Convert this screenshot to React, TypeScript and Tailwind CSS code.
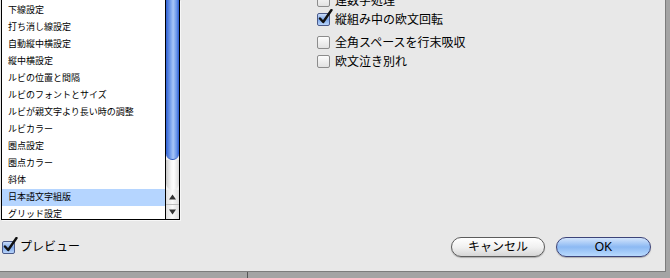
import { ReactNode } from 'react'

const FONT = "font-['Lucida_Grande','Liberation_Sans','Noto_Sans_CJK_JP',sans-serif]"

const items = [
  '下線設定',
  '打ち消し線設定',
  '自動縦中横設定',
  '縦中横設定',
  'ルビの位置と間隔',
  'ルビのフォントとサイズ',
  'ルビが親文字より長い時の調整',
  'ルビカラー',
  '圏点設定',
  '圏点カラー',
  '斜体',
  '日本語文字組版',
  'グリッド設定',
]

function Check({ checked }: { checked?: boolean }) {
  return (
    <div className="relative w-[13px] h-[13px] shrink-0">
      <div
        className={
          checked
            ? 'w-full h-full rounded-[2px] border border-[#4a5a8a] bg-gradient-to-b from-[#c9dcf8] via-[#7fa9ea] to-[#b8d4fa]'
            : 'w-full h-full rounded-[2px] border border-[#8c8c8c] bg-gradient-to-b from-[#fdfdfd] via-[#efefef] to-[#e2e2e2]'
        }
      />
      {checked && (
        <svg className="absolute left-[1px] top-[-4px]" width="15" height="16" viewBox="0 0 15 16">
          <path d="M2 9.5 L5.2 13 L13.5 1" fill="none" stroke="#111" strokeWidth="2.4" strokeLinecap="round" strokeLinejoin="round" />
        </svg>
      )}
    </div>
  )
}

function Option({ checked, children, className }: { checked?: boolean; children: ReactNode; className?: string }) {
  return (
    <div className={`flex items-center gap-[5px] h-[13px] ${className ?? ''}`}>
      <Check checked={checked} />
      <span className="text-[12px] leading-none text-black">{children}</span>
    </div>
  )
}

function Scrollbar() {
  return (
    <div className="w-[14px] flex flex-col bg-[#f0f0f0] border-l border-black">
      {/* thumb */}
      <div className="h-[160px] rounded-b-[7px] border-b border-[#2450b8] bg-[linear-gradient(to_right,#2f5fd2,#6d98ea_30%,#a7c5f6_55%,#6d98ea_80%,#2f5fd2)]" />
      {/* track */}
      <div className="flex-1 bg-[linear-gradient(to_right,#c9c9c9,#f7f7f7_40%,#ffffff_60%,#d9d9d9)] rounded-b-[7px]" />
      {/* arrows */}
      <div className="h-[15px] flex items-center justify-center bg-[linear-gradient(to_right,#dedede,#fafafa,#dedede)] border-b border-[#bdbdbd]">
        <svg width="7" height="6" viewBox="0 0 7 6"><path d="M3.5 0.5 L7 5.5 L0 5.5 Z" fill="#333" /></svg>
      </div>
      <div className="h-[14px] flex items-center justify-center bg-[linear-gradient(to_right,#dedede,#fafafa,#dedede)]">
        <svg width="7" height="6" viewBox="0 0 7 6"><path d="M0 0.5 L7 0.5 L3.5 5.5 Z" fill="#333" /></svg>
      </div>
    </div>
  )
}

export default function App() {
  return (
    <div className={`w-[670px] h-[278px] overflow-hidden bg-[#a4a4a4] ${FONT}`}>
      <div className="w-[666px] h-[272px] flex flex-col bg-[#e8e8e8] border-r border-b border-[#7c7c7c]">
        {/* top area */}
        <div className="flex h-[220px]">
          <div className="w-[179px] ml-px flex border-x border-b border-black shadow-[1px_1px_0_#f7f7f7]">
            <div className="flex-1 bg-white pt-[2px]">
              {items.map(t => (
                <div
                  key={t}
                  className={`h-[17px] flex items-center pl-[6px] text-[9px] leading-none text-black ${
                    t === '日本語文字組版' ? 'bg-[#b5d5ff]' : ''
                  }`}
                >
                  {t}
                </div>
              ))}
            </div>
            <Scrollbar />
          </div>

          <div className="ml-[137px] flex flex-col -mt-[6px]">
            <Option>連数字処理</Option>
            <Option checked className="mt-[6px]">縦組み中の欧文回転</Option>
            <Option className="mt-[10px]">全角スペースを行末吸収</Option>
            <Option className="mt-[6px]">欧文泣き別れ</Option>
          </div>
        </div>

        {/* bottom row */}
        <div className="flex items-center pt-[17px] pr-[14px]">
          <div className="flex items-center gap-[5px] ml-[2px]">
            <Check checked />
            <span className="text-[12px] leading-none text-black">プレビュー</span>
          </div>
          <div className="ml-auto flex gap-[11px]">
            <button className="w-[94px] h-[20px] rounded-full border border-[#5c5c5c] bg-gradient-to-b from-[#ffffff] via-[#f1f1f1] to-[#d6d6d6] text-[12px] leading-none text-black shadow-[0_1px_1px_rgba(0,0,0,0.25)]">
              キャンセル
            </button>
            <button className="w-[95px] h-[20px] rounded-full border border-[#3d4479] bg-gradient-to-b from-[#d3e4fb] via-[#8cb9f3] to-[#b9dafd] text-[12px] leading-none text-black shadow-[0_1px_1px_rgba(0,0,0,0.25)]">
              OK
            </button>
          </div>
        </div>
      </div>
      <div className="h-[6px] w-[666px] flex">
        <div className="w-[248px] border-r border-[#555]" />
      </div>
    </div>
  )
}
